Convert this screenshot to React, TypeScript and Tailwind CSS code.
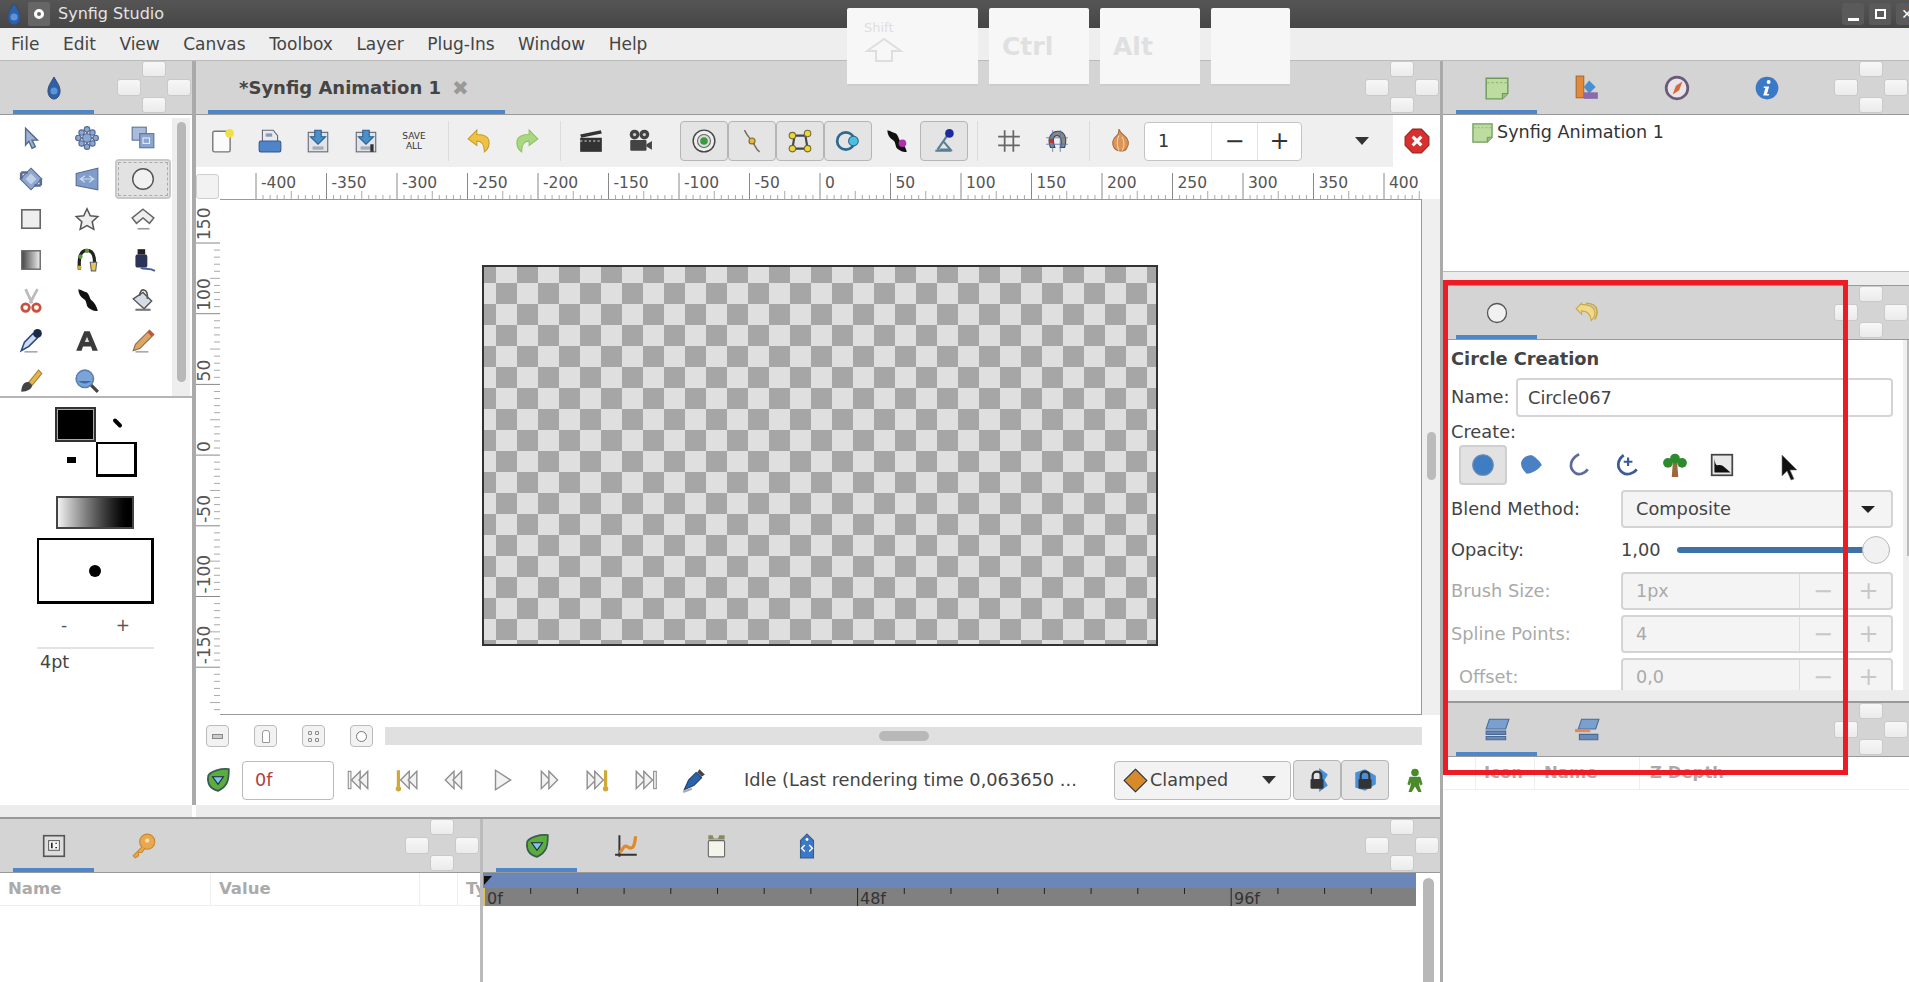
import React from "react";

type P = { s?: number };
const Svg = ({ s = 26, children }: { s?: number; children: React.ReactNode }) => (
	<svg width={s} height={s} viewBox="0 0 24 24" className="shrink-0">
		{children}
	</svg>
);

const Flame = ({ s = 26 }: P) => (
	<Svg s={s}>
		<path d="M12 1C9.5 6 5.5 10 6 16c.4 4 3 7 6 7s5.6-3 6-7c.5-6-3.5-10-6-15z" fill="#2a62ad" stroke="#3b4a66" />
		<circle cx="12" cy="15" r="3.5" fill="#5f93d6" />
	</Svg>
);
const Pointer = () => (
	<Svg>
		<path d="M7 3l11 11h-5l3 6-3 1.5-3-6.5-3 3.5z" fill="#9db3d6" stroke="#55698c" strokeWidth="1.3" />
	</Svg>
);
const Transform = () => (
	<Svg>
		<path d="M12 4v16M4 12h16" stroke="#6a86b5" strokeWidth="2" />
		<circle cx="12" cy="12" r="4" fill="#8aa6d4" stroke="#55698c" />
		{[[12, 4], [12, 20], [4, 12], [20, 12], [7, 7], [17, 7], [7, 17], [17, 17]].map(([x, y], i) => (
			<circle key={i} cx={x} cy={y} r="2.5" fill="#8aa6d4" stroke="#55698c" />
		))}
	</Svg>
);
const Squares = () => (
	<Svg>
		<rect x="2" y="2" width="13" height="12" fill="#a9bcdc" stroke="#5d7196" />
		<rect x="9" y="8" width="13" height="13" fill="#8ba5cf" stroke="#5d7196" />
		<rect x="12" y="12" width="6" height="5" fill="none" stroke="#e8eef8" />
	</Svg>
);
const Rotate = () => (
	<Svg>
		<path d="M12 2l10 10-10 10L2 12z" fill="#8ea7cf" stroke="#5a6d90" />
		<path d="M3 6h6M3 6v6M21 18h-6M21 18v-6" stroke="#5a6d90" strokeWidth="2.5" fill="none" />
		<path d="M12 7l5 5-5 5-5-5z" fill="#c1d0e8" />
	</Svg>
);
const Mirror = () => (
	<Svg>
		<path d="M2 7l20-5v20L2 18z" fill="#7f9ccb" stroke="#5a6d90" />
		<path d="M5 12h14M10 9l-4 3 4 3M14 9l4 3-4 3" stroke="#d6e1f2" fill="none" />
	</Svg>
);
const Circle = ({ s = 26 }: P) => (
	<Svg s={s}>
		<circle cx="12" cy="12" r="9.5" fill="#f1f1f1" stroke="#555" strokeWidth="1.3" />
	</Svg>
);
const Rect = () => (
	<Svg>
		<rect x="3.5" y="3.5" width="17" height="17" fill="#eee" stroke="#666" strokeWidth="1.5" />
	</Svg>
);
const Star = () => (
	<Svg>
		<path d="M12 2.5l3 6.5 7 .8-5.2 4.7 1.5 7L12 18l-6.3 3.5 1.5-7L2 9.8 9 9z" fill="#eee" stroke="#555" strokeWidth="1.4" />
	</Svg>
);
const Polygon = () => (
	<Svg>
		<path d="M12 3l10 8-4 5-6-5-6 5-4-5z" fill="#eee" stroke="#666" strokeWidth="1.4" />
		<path d="M7 21h11" stroke="#999" strokeWidth="1.5" />
	</Svg>
);
const Gradient = () => (
	<svg width="26" height="26" viewBox="0 0 24 24">
		<defs>
			<linearGradient id="gr1">
				<stop offset="0" stopColor="#444" />
				<stop offset="1" stopColor="#f0f0f0" />
			</linearGradient>
		</defs>
		<rect x="3.5" y="3.5" width="17" height="17" fill="url(#gr1)" stroke="#666" strokeWidth="1.3" />
	</svg>
);
const Spline = () => (
	<Svg>
		<path d="M5 21c-1-14 2-18 7-18s7 5 7 12" fill="none" stroke="#222" strokeWidth="3" />
		<circle cx="6" cy="9" r="2" fill="#5a9a3a" />
		<circle cx="5" cy="19" r="2" fill="#c9a83a" />
		<circle cx="12" cy="3.5" r="2" fill="#5a9a3a" />
		<path d="M15 14h6l-1 8h-4z" fill="#e4c65a" stroke="#666" />
	</Svg>
);
const Ink = () => (
	<Svg>
		<rect x="7" y="2" width="7" height="5" fill="#222" />
		<rect x="5" y="7" width="11" height="12" rx="2" fill="#2b3358" />
		<path d="M10 19c3 2 8 0 13 3" stroke="#4a5f9a" strokeWidth="2" fill="none" />
	</Svg>
);
const Scissors = () => (
	<Svg>
		<path d="M7 2l6 13M18 2l-7 13" stroke="#bbb" strokeWidth="2.5" />
		<circle cx="7" cy="19" r="3.5" fill="none" stroke="#c9503c" strokeWidth="2.5" />
		<circle cx="17" cy="19" r="3.5" fill="none" stroke="#c9503c" strokeWidth="2.5" />
	</Svg>
);
const Feather = ({ dot }: { dot?: boolean }) => (
	<Svg>
		<path d="M4 2c4 1 5 2 8 3 3 3 2 6 5 8 2 2 4 5 5 9-5 1-7-2-9-3-2-3-1-6-4-8C6 9 4 6 4 2z" fill="#111" />
		{dot && <circle cx="18" cy="14" r="3.5" fill="#b030b0" />}
	</Svg>
);
const Bucket = () => (
	<Svg>
		<path d="M3 11l9-6 8 8-7 7z" fill="#d6dce6" stroke="#555" strokeWidth="1.3" />
		<path d="M9 8c0-8 8-7 7 3" fill="none" stroke="#555" strokeWidth="1.5" />
		<path d="M5 21h14" stroke="#777" strokeWidth="2" />
	</Svg>
);
const Eyedropper = () => (
	<Svg>
		<path d="M3 21l3-8 8-8 4 4-8 8z" fill="#cfdcf0" stroke="#2d4a86" strokeWidth="1.5" />
		<circle cx="18" cy="5" r="4" fill="#1c2a4a" />
		<path d="M6 22h12" stroke="#aaa" strokeWidth="1.5" />
	</Svg>
);
const Letter = () => (
	<Svg>
		<path d="M2 21L9.5 3h5L22 21h-5l-1.3-4H8.3L7 21z" fill="#3a3a3a" />
		<path d="M10 13h4l-2-5z" fill="#ddd" />
	</Svg>
);
const Pencil = () => (
	<Svg>
		<path d="M3 21l2-6L18 2l4 4L9 19z" fill="#dca66a" stroke="#8a6a4a" />
		<path d="M18 2l4 4-2 2-4-4z" fill="#c9503c" />
		<path d="M5 22h12" stroke="#aaa" strokeWidth="1.5" />
	</Svg>
);
const Brush = () => (
	<Svg>
		<path d="M10 13L19 2l3 3-9 11z" fill="#e4b64e" stroke="#a98430" />
		<path d="M3 22c0-6 3-10 7-9l3 3c0 3-4 6-10 6z" fill="#444" />
	</Svg>
);
const Zoom = () => (
	<Svg>
		<path d="M14 14l8 8" stroke="#444" strokeWidth="3" />
		<circle cx="10" cy="10" r="8" fill="#7ba4d8" stroke="#5a7fb0" strokeWidth="1.5" />
		<path d="M4 12c3 3 9 3 12 0" fill="#3c6aa8" />
	</Svg>
);

const Page = () => (
	<Svg>
		<rect x="3.5" y="3" width="16" height="19" rx="1.5" fill="#fbfbfb" stroke="#777" strokeWidth="1.3" />
		<circle cx="19" cy="5" r="4" fill="#f2e040" />
	</Svg>
);
const Floppy = () => (
	<Svg>
		<path d="M5 2h10l4 5v6H5z" fill="#e8eaf0" stroke="#667" />
		<rect x="8" y="5" width="6" height="3" fill="#8899b0" />
		<rect x="2" y="12" width="20" height="10" rx="1.5" fill="#4f85c8" stroke="#345a92" />
	</Svg>
);
const SaveAs = ({ extra }: { extra?: boolean }) => (
	<Svg>
		<rect x="3" y="4" width="18" height="18" fill="#dfe4ea" stroke="#667" />
		<rect x="7" y="17" width="10" height="3" fill="#aaa" />
		<path d="M9 2h6v6h4l-7 7-7-7h4z" fill="#4a90c8" stroke="#2c5f90" />
		{extra && <rect x="16" y="15" width="3" height="7" fill="#333" />}
	</Svg>
);
const Arrow = ({ color, edge, flip }: { color: string; edge: string; flip?: boolean }) => (
	<svg width="26" height="26" viewBox="0 0 24 24" className={flip ? "-scale-x-100" : ""}>
		<path d="M10 2L2 10l8 6v-4c5 0 7 3 7 10 4-3 5-7 4-11-1-3-5-5-11-5z" fill={color} stroke={edge} />
	</svg>
);
const Clapper = () => (
	<Svg>
		<path d="M2 6l19-4 1 3-19 4z" fill="#333" />
		<rect x="2" y="9" width="20" height="13" fill="#333" />
		<path d="M2 12h20" stroke="#ddd" strokeDasharray="2 2" />
	</Svg>
);
const Camera = () => (
	<Svg>
		<circle cx="7" cy="6" r="4.5" fill="#444" />
		<circle cx="16" cy="6" r="4.5" fill="#444" />
		<circle cx="7" cy="6" r="1.5" fill="#ccc" />
		<circle cx="16" cy="6" r="1.5" fill="#ccc" />
		<rect x="3" y="11" width="15" height="10" rx="1" fill="#444" />
		<path d="M18 15l5-3v8l-5-3z" fill="#444" />
	</Svg>
);
const Target = () => (
	<Svg>
		<circle cx="12" cy="12" r="10" fill="#eee" stroke="#444" strokeWidth="1.3" />
		<circle cx="12" cy="12" r="6" fill="#ddd" stroke="#666" />
		<circle cx="12" cy="12" r="3.5" fill="#3c9a3c" />
	</Svg>
);
const Tangent = () => (
	<Svg>
		<path d="M5 2c3 6 4 6 7 10s3 7 7 10" fill="none" stroke="#776a55" strokeWidth="1.3" />
		<circle cx="12" cy="12" r="2.8" fill="#e8b83a" stroke="#776a30" />
	</Svg>
);
const Link = () => (
	<Svg>
		<path d="M5 19L7 7h12M7 19h12L17 7" fill="none" stroke="#445" strokeWidth="2" />
		<circle cx="19" cy="5" r="3" fill="#e8d83a" stroke="#776a30" />
		<circle cx="5" cy="7" r="3" fill="#e8d83a" stroke="#776a30" />
		<circle cx="19" cy="19" r="3" fill="#e8d83a" stroke="#776a30" />
		<circle cx="5" cy="19" r="3" fill="#e8d83a" stroke="#776a30" />
	</Svg>
);
const Width = () => (
	<Svg>
		<circle cx="10" cy="12" r="8" fill="none" stroke="#2a6a90" strokeWidth="2.5" />
		<circle cx="17" cy="12" r="4.5" fill="#4ac0e0" stroke="#2a6a90" />
	</Svg>
);
const Bone = () => (
	<Svg>
		<path d="M4 21h15M6 20l9-13M8 20h10L12 13" fill="none" stroke="#5a7f94" strokeWidth="2" />
		<circle cx="17" cy="5" r="4" fill="#1c2aa0" />
	</Svg>
);
const Grid = () => (
	<Svg>
		<path d="M8 2v20M16 2v20M2 8h20M2 16h20" stroke="#666" strokeWidth="1.6" />
	</Svg>
);
const Magnet = () => (
	<Svg>
		<path d="M6 18C2 8 8 3 13 3s9 5 6 15h-4c2-5 1-11-3-11s-4 5-2 11z" fill="#888" stroke="#444" />
		<path d="M2 9h20M2 15h20M8 2v20M15 2v20" stroke="#5a7ab0" strokeWidth=".8" />
		<circle cx="7" cy="12" r="2" fill="#c83030" />
	</Svg>
);
const Onion = () => (
	<Svg>
		<path d="M11 1c1 3 2 4 5 6 4 3 5 8 2 12-2 3-8 3-11 0-3-4-2-9 2-12 2-1 2-3 2-6z" fill="#dc9458" stroke="#a96a3a" />
		<path d="M11 7c-2 4-2 9 0 14M14 8c2 4 2 9 0 13" stroke="#f4d0a8" fill="none" />
	</Svg>
);
const Stop = () => (
	<Svg>
		<path d="M8 1h8l7 7v8l-7 7H8l-7-7V8z" fill="#d6302f" stroke="#9a2020" />
		<path d="M8 8l8 8M16 8l-8 8" stroke="#fff" strokeWidth="3" />
	</Svg>
);
const Sheet = ({ s = 26 }: P) => (
	<Svg s={s}>
		<path d="M2 3h20v14l-5 5H2z" fill="#bcdca0" stroke="#6f9a5c" strokeWidth="1.3" />
		<path d="M3 7h18" stroke="#8fb878" strokeDasharray="2 2" />
		<path d="M17 22v-5h5" fill="#9ac080" stroke="#6f9a5c" />
	</Svg>
);
const Palette = () => (
	<Svg>
		<rect x="2" y="1" width="7" height="20" fill="#e08a3a" stroke="#a8682e" />
		<path d="M14 5l6 6-6 6-5-6z" fill="#4a90d0" />
		<rect x="9" y="16" width="13" height="6" fill="#8a6aa8" />
	</Svg>
);
const Compass = () => (
	<Svg>
		<circle cx="12" cy="12" r="10" fill="#e8e4e8" stroke="#6a5a78" strokeWidth="2.5" />
		<path d="M17 6l-3 8-6 4 3-8z" fill="#d8683a" />
	</Svg>
);
const Info = () => (
	<Svg>
		<circle cx="12" cy="12" r="10.5" fill="#3a78c8" />
		<circle cx="13.5" cy="6.5" r="1.8" fill="#fff" />
		<path d="M9 10.5h5l-2 7h2l-.5 1.5H8.500l2-7H9z" fill="#fff" />
	</Svg>
);
const History = () => (
	<Svg>
		<path d="M7 3L2 8l5 5v-3c4 0 8 2 9 9 3-3 4-7 3-9-1-4-6-6-12-6z" fill="#f0d98a" stroke="#c9a845" />
		<path d="M11 3c5 0 9 2 10 6 1 3 0 6-2 9" fill="none" stroke="#c9a845" strokeWidth="1.5" />
	</Svg>
);
const Layers = () => (
	<Svg>
		<path d="M5 2h18l-3 9H2z" fill="#7aa0d0" stroke="#486a98" />
		<path d="M2 13h18v3H2zM2 18h18v3H2z" fill="#6a8ab8" stroke="#486a98" />
	</Svg>
);
const LayerGroups = () => (
	<Svg>
		<path d="M7 2h16l-3 9H4z" fill="#7aa0d0" stroke="#486a98" />
		<path d="M1 11h14v3H1z" fill="#e08a5a" />
		<path d="M5 16h17v5H5z" fill="#6a8ab8" stroke="#486a98" />
	</Svg>
);
const Params = () => (
	<Svg>
		<rect x="2.5" y="2.5" width="19" height="19" fill="#ddd" stroke="#555" strokeWidth="1.5" />
		<rect x="7" y="7" width="10" height="9" fill="#f4f4f4" stroke="#666" />
		<path d="M10 9v5M14 9v1M14 13v1" stroke="#222" strokeWidth="1.5" />
	</Svg>
);
const Key = () => (
	<Svg>
		<circle cx="15" cy="8" r="7" fill="#e8a850" stroke="#c98830" />
		<circle cx="15" cy="7" r="2" fill="#f6dca8" />
		<path d="M10 13L2 21l2 2 3-2v-3h3l3-4" fill="#e8a850" stroke="#c98830" />
	</Svg>
);
const Shield = ({ s = 26 }: P) => (
	<Svg s={s}>
		<path d="M22 2c0 10-1 16-10 20C4 20 2 14 3 8c2-4 12-7 19-6z" fill="#5cae3c" stroke="#3a5a54" strokeWidth="1.6" />
		<path d="M7 9h10l-5 7z" fill="#7cc8e8" stroke="#224" />
	</Svg>
);
const Curves = () => (
	<Svg>
		<path d="M5 2v20M1 20h20" stroke="#333" strokeWidth="1.8" />
		<path d="M5 18c4-2 3-8 8-5s6-2 7-10" fill="none" stroke="#e08a30" strokeWidth="3" />
	</Svg>
);
const Keyframes = () => (
	<Svg>
		<path d="M4 2h4l1 3h4l1-3h5v4H4z" fill="#8a8a60" />
		<rect x="4" y="7" width="15" height="15" rx="1" fill="#f4f4ec" stroke="#666" />
	</Svg>
);
const Meta = () => (
	<Svg>
		<path d="M12 1l6 6v16H6V7z" fill="#3a78c8" stroke="#3a5a88" />
		<circle cx="12" cy="6" r="1.3" fill="#fff" />
		<path d="M10 11l-3 3 3 3M14 11l3 3-3 3" stroke="#fff" fill="none" strokeWidth="1.3" />
	</Svg>
);
const Spot = () => (
	<Svg>
		<circle cx="12" cy="12" r="9.5" fill="#3e7cc4" stroke="#6a8ab0" />
	</Svg>
);
const Region = () => (
	<Svg>
		<path d="M3 9c2-5 6-6 10-6 5 3 8 7 9 9-3 4-9 8-14 8-3-3-6-6-5-11z" fill="#4a80c4" />
	</Svg>
);
const Outline = () => (
	<Svg>
		<path d="M13 2C5 6 3 14 9 19c4 3 9 1 12-3" fill="none" stroke="#5e6a9a" strokeWidth="2.5" />
	</Svg>
);
const Advanced = () => (
	<Svg>
		<path d="M9 3C3 7 2 15 8 19c4 3 10 1 13-3" fill="none" stroke="#3a5a98" strokeWidth="2.5" />
		<path d="M13 5v8M9 9h8" stroke="#3a5a98" strokeWidth="2" />
	</Svg>
);
const Plant = () => (
	<Svg>
		<path d="M10 10h4l1 13H9z" fill="#9a6a3a" />
		<circle cx="12" cy="6" r="4.5" fill="#2e8a2e" />
		<circle cx="5.5" cy="10" r="4.5" fill="#2e8a2e" />
		<circle cx="18.5" cy="10" r="4.5" fill="#2e8a2e" />
	</Svg>
);
const Picture = () => (
	<Svg>
		<rect x="2.5" y="2.5" width="19" height="19" fill="#e8e8e8" stroke="#444" strokeWidth="1.6" />
		<path d="M5 19V6c1 8 3 6 5 6 3 0 5 3 10 7z" fill="#111" />
	</Svg>
);
const Lock = ({ left }: { left?: boolean }) => (
	<Svg>
		<path d={left ? "M14 1l8 6-3 5 3 5-8 6z" : "M3 5l9-3 10 6v8l-10 6-9-3z"} fill="#4a90d8" />
		<path d="M8 11V8c0-5 8-5 8 0v3" fill="none" stroke="#333" strokeWidth="2" />
		<rect x="6" y="11" width="12" height="9" rx="1" fill="#333" />
	</Svg>
);
const Walker = () => (
	<Svg>
		<circle cx="12" cy="5" r="3.5" fill="#4a8a2a" />
		<path d="M7 9h10l2 7-2 1-1-3v3l2 6h-3l-3-5-3 5H6l2-6v-3l-1 3-2-1z" fill="#4a8a2a" />
	</Svg>
);
const Jack = () => (
	<Svg>
		<path d="M3 21l4-9 7-7 5 5-7 7z" fill="#2a62ad" stroke="#1c3e70" />
		<path d="M17 2l5 5-3 2-4-4z" fill="#444" />
		<path d="M2 23l8-3" stroke="#aaa" strokeWidth="2" />
	</Svg>
);

const Transport = ({ kind }: { kind: string }) => {
	const c = "#f2f2f2";
	const st = "#8f8f8f";
	const left = (x: number) => <path d={`M${x + 8} 4L${x} 12l8 8z`} fill={c} stroke={st} strokeWidth="1.3" />;
	const right = (x: number) => <path d={`M${x} 4l8 8-8 8z`} fill={c} stroke={st} strokeWidth="1.3" />;
	const therm = (x: number) => (
		<g>
			<path d={`M${x} 3v15`} stroke="#d0a838" strokeWidth="3" />
			<circle cx={x} cy="20" r="2.5" fill="#d0a838" />
		</g>
	);
	return (
		<Svg>
			{kind === "first" && (<><rect x="3" y="4" width="2.5" height="16" fill={c} stroke={st} />{left(6)}{left(13)}</>)}
			{kind === "prevk" && (<>{therm(5)}{left(7)}{left(14)}</>)}
			{kind === "prev" && (<>{left(4)}{left(11)}</>)}
			{kind === "play" && <path d="M6 3l14 9-14 9z" fill={c} stroke={st} strokeWidth="1.3" />}
			{kind === "next" && (<>{right(4)}{right(11)}</>)}
			{kind === "nextk" && (<>{right(2)}{right(9)}{therm(19)}</>)}
			{kind === "last" && (<>{right(3)}{right(10)}<rect x="19" y="4" width="2.5" height="16" fill={c} stroke={st} /></>)}
		</Svg>
	);
};

const dockBtn = "rounded-[3px] bg-gradient-to-b from-[#f7f7f7] to-[#ebebeb] border border-[#c9c9c9]";
const Dock = () => (
	<div className="grid grid-cols-[25px_25px_25px] grid-rows-[18px_18px_18px] shrink-0">
		<div className={`col-start-2 row-start-1 w-[24px] h-[16px] ${dockBtn}`} />
		<div className={`col-start-1 row-start-2 w-[24px] h-[17px] ${dockBtn}`} />
		<div className={`col-start-3 row-start-2 w-[24px] h-[17px] ${dockBtn}`} />
		<div className={`col-start-2 row-start-3 w-[24px] h-[16px] ${dockBtn}`} />
	</div>
);

// tab strip shared by every dock panel; each tab is 90px wide around its icon
const TabBar = ({ icons }: { icons: React.ReactNode[] }) => (
	<div className="h-[54px] bg-[#d4d4d4] border-b border-[#999] flex justify-between shrink-0 overflow-hidden">
		<div className="flex pl-[13px]">
			{icons.map((ic, i) => (
				<div key={i} className={`w-[81px] mr-[9px] h-full flex items-center justify-center border-t-[4px] border-b-[4px] border-t-transparent ${i === 0 ? "border-b-[#4f86c9]" : "border-b-transparent"}`}>
					{ic}
				</div>
			))}
		</div>
		<Dock />
	</div>
);

const Slot = ({ w = "w-[48px]", children }: { w?: string; children?: React.ReactNode }) => (
	<div className={`h-full flex items-center justify-center shrink-0 ${w}`}>{children}</div>
);
const ToggleBtn = ({ on = true, children }: { on?: boolean; children: React.ReactNode }) => (
	<div className={`w-[48px] h-[40px] shrink-0 flex items-center justify-center rounded-[4px] ${on ? "bg-[#e4e4e4] border border-[#b5b5b5]" : ""}`}>
		{children}
	</div>
);
const Sep = () => <div className="w-px h-[40px] bg-[#dcdcdc] shrink-0" />;

const tools = [
	<Pointer />, <Transform />, <Squares />,
	<Rotate />, <Mirror />, <Circle />,
	<Rect />, <Star />, <Polygon />,
	<Gradient />, <Spline />, <Ink />,
	<Scissors />, <Feather />, <Bucket />,
	<Eyedropper />, <Letter />, <Pencil />,
	<Brush />, <Zoom />,
];

const Toolbox = () => (
	<div className="w-[192px] shrink-0 flex flex-col">
		<TabBar icons={[<Flame s={24} />]} />
		<div className="h-[283px] flex border-b-2 border-[#b5b5b5] overflow-hidden shrink-0">
			<div className="w-[172px] pl-[3px] pt-[3px] grid grid-cols-[56px_56px_56px] auto-rows-[40.5px] justify-items-center items-center content-start">
				{tools.map((t, i) => (
					<div key={i} className={i === 5 ? "w-[56px] h-[40px] rounded-[4px] bg-[#e2e2e2] border-2 border-[#c8c8c8] outline-1 outline-dashed -outline-offset-4 outline-[#aaa] flex items-center justify-center" : "flex items-center justify-center"}>
						{t}
					</div>
				))}
			</div>
			<div className="w-[18px] h-[278px] mt-[3px] bg-[#eeeeee] flex justify-center">
				<div className="w-[9px] h-[260px] mt-[4px] rounded-full bg-[#b8b8b8]" />
			</div>
		</div>
		<div className="flex-1 flex flex-col pl-[37px] pt-[9px] min-h-0">
			<div className="flex h-[70px] ml-[18px]">
				<div className="w-[41px] h-[35px] bg-black border-[3px] border-[#333] outline outline-1 -outline-offset-3 outline-[#aaa]" />
				<div className="w-[41px] h-[35px] mt-[35px] bg-white border-2 border-black border-b-[3px] border-r-[3px] relative">
					<div className="absolute left-[14px] top-[-23px] w-[11px] h-[4px] bg-black rotate-45 rounded-full" />
					<div className="absolute left-[-31px] top-[13px] w-[9px] h-[6px] bg-black" />
				</div>
			</div>
			<div className="w-[78px] h-[33px] mt-[19px] ml-[19px] border-2 border-[#444] bg-gradient-to-r from-[#f2f2f2] to-black" />
			<div className="w-[117px] h-[66px] mt-[9px] bg-white border-2 border-black border-b-[3px] border-r-[3px] flex items-center justify-center">
				<div className="w-[12px] h-[12px] rounded-full bg-black" />
			</div>
			<div className="w-[117px] flex justify-between px-[24px] mt-[8px] text-[17px] leading-[26px] text-[#555]">
				<span>-</span>
				<span>+</span>
			</div>
			<div className="w-[117px] mt-[9px] border-t-2 border-[#e3e3e3] pl-[3px] text-[17.6px] leading-[26px] text-[#444]">4pt</div>
		</div>
		<div className="h-[12px] bg-[#ececec] shrink-0" />
	</div>
);

const hTicks = Array.from({ length: 171 }, (_, i) => i);
const TopRuler = () => (
	<svg width="1202" height="32" className="shrink-0">
		{hTicks.map((i) => {
			const x = 36 + i * 7.05;
			const major = i % 10 === 0;
			const mid = i % 5 === 0;
			return <line key={i} x1={x} x2={x} y1={major ? 6 : mid ? 24 : 28} y2={32} stroke={major ? "#888" : "#aaa"} />;
		})}
		{Array.from({ length: 17 }, (_, i) => -400 + i * 50).map((v, i) => (
			<text key={v} x={36 + i * 70.5 + 5} y={21} fontSize="15.5" fill="#555" fontFamily="DejaVu Sans">
				{v}
			</text>
		))}
	</svg>
);
const LeftRuler = () => (
	<svg width="24" height="516" className="shrink-0">
		{Array.from({ length: 74 }, (_, i) => i).map((i) => {
			const y = 44 + i * 7.07;
			const major = i % 10 === 0;
			return <line key={i} x1={major ? 0 : i % 5 === 0 ? 14 : 18} x2={24} y1={y} y2={y} stroke={major ? "#888" : "#aaa"} />;
		})}
		{[150, 100, 50, 0, -50, -100, -150].map((v, i) => (
			<text key={v} x={14} y={44 + i * 70.7 - 3} fontSize="17" fill="#555" fontFamily="DejaVu Sans" transform={`rotate(-90 14 ${44 + i * 70.7 - 3})`}>
				{v}
			</text>
		))}
	</svg>
);

const Center = () => (
	<div className="flex-1 min-w-0 flex flex-col">
		<div className="h-[54px] bg-[#d4d4d4] border-b border-[#999] flex justify-between shrink-0">
			<div className="ml-[12px] w-[297px] h-full border-t-[4px] border-t-transparent border-b-[4px] border-b-[#4f86c9] flex items-center pl-[31px] gap-[11px] font-bold text-[18px] text-[#444]">
				<span className="whitespace-nowrap">*Synfig Animation 1</span>
				<span className="text-[#999] text-[20px] leading-none">✖</span>
			</div>
			<Dock />
		</div>
		<div className="h-[52px] flex shrink-0">
			<div className="w-[1197px] bg-[#efefef] flex items-center pl-[2px]">
				<Slot><Page /></Slot>
				<Slot><Floppy /></Slot>
				<Slot><SaveAs /></Slot>
				<Slot><SaveAs extra /></Slot>
				<Slot>
					<div className="text-[9px] leading-[10px] text-[#333] text-center">SAVE<br />ALL</div>
				</Slot>
				<Slot w="w-[10px]" />
				<Sep />
				<Slot w="w-[6px]" />
				<Slot><Arrow color="#eec243" edge="#c69a2a" /></Slot>
				<Slot><Arrow color="#a8d880" edge="#8cc060" flip /></Slot>
				<Slot w="w-[9px]" />
				<Sep />
				<Slot w="w-[6px]" />
				<Slot><Clapper /></Slot>
				<Slot w="w-[49px]"><Camera /></Slot>
				<Slot w="w-[16px]" />
				<ToggleBtn><Target /></ToggleBtn>
				<ToggleBtn><Tangent /></ToggleBtn>
				<ToggleBtn><Link /></ToggleBtn>
				<ToggleBtn><Width /></ToggleBtn>
				<ToggleBtn on={false}><Feather dot /></ToggleBtn>
				<ToggleBtn><Bone /></ToggleBtn>
				<Slot w="w-[9px]" />
				<Sep />
				<Slot w="w-[7px]" />
				<Slot><Grid /></Slot>
				<Slot><Magnet /></Slot>
				<Slot w="w-[8px]" />
				<Sep />
				<Slot w="w-[6px]" />
				<Slot><Onion /></Slot>
				<div className="w-[158px] h-[39px] bg-white border border-[#c4c4c4] rounded-[4px] flex items-center text-[17.6px] text-[#333] shrink-0">
					<span className="w-[66px] pl-[13px]">1</span>
					<span className="w-[46px] h-full border-l border-[#e4e4e4] flex items-center justify-center text-[24px]">−</span>
					<span className="flex-1 h-full border-l border-[#e4e4e4] flex items-center justify-center text-[24px]">+</span>
				</div>
				<Slot w="w-[120px]">
					<div className="w-0 h-0 border-x-[7px] border-x-transparent border-t-[8px] border-t-[#333]" />
				</Slot>
			</div>
			<div className="flex-1 flex items-center justify-center"><Stop /></div>
		</div>
		<div className="h-[32px] flex shrink-0">
			<div className="w-[24px] flex items-end shrink-0">
				<div className="w-[23px] h-[25px] rounded-[3px] bg-[#f2f2f2] border border-[#cfcfcf]" />
			</div>
			<TopRuler />
		</div>
		<div className="h-[516px] flex shrink-0">
			<LeftRuler />
			<div className="w-[1202px] bg-white border-t border-b border-r border-[#999] flex items-center justify-center pr-[2px] pb-[3px]">
				<div className="w-[676px] h-[381px] border-2 border-[#333] box-border bg-[conic-gradient(#dfdfdf_25%,#a6a6a6_0_50%,#dfdfdf_0_75%,#a6a6a6_0)] bg-[length:42px_42px] bg-[position:-9px_-5px]" />
			</div>
			<div className="flex-1 bg-[#efefef] flex justify-center">
				<div className="w-[9px] h-[48px] mt-[233px] rounded-full bg-[#bbb]" />
			</div>
		</div>
		<div className="h-[45px] flex items-start pt-[10px] pl-[10px] shrink-0 gap-[25px]">
			{["m", "d", "g", "c"].map((k) => (
				<div key={k} className="w-[23px] h-[22px] rounded-[4px] bg-[#f2f2f2] border border-[#bbb] flex items-center justify-center shrink-0">
					{k === "m" && <div className="w-[11px] h-[5px] border border-[#888] bg-[#ccc]" />}
					{k === "d" && <div className="w-[8px] h-[13px] border border-[#999] rounded-t-[3px] bg-white" />}
					{k === "g" && (
						<div className="grid grid-cols-2 gap-[3px]">
							<div className="w-[4px] h-[4px] border border-[#888] rounded-[1px]" />
							<div className="w-[4px] h-[4px] border border-[#888] rounded-[1px]" />
							<div className="w-[4px] h-[4px] border border-[#888] rounded-[1px]" />
							<div className="w-[4px] h-[4px] border border-[#888] rounded-[1px]" />
						</div>
					)}
					{k === "c" && <div className="w-[11px] h-[11px] border border-[#777] rounded-full bg-white" />}
				</div>
			))}
			<div className="w-[1037px] h-[18px] mt-[2px] -ml-[13px] bg-[#e0e0e0] flex items-center shrink-0 pl-[494px]">
				<div className="w-[50px] h-[10px] rounded-full bg-[#b8b8b8]" />
			</div>
		</div>
		<div className="h-[40px] flex items-center shrink-0">
			<Slot w="w-[46px] pr-[2px]"><Shield /></Slot>
			<div className="w-[92px] h-[39px] shrink-0 rounded-[4px] border border-[#bbb] bg-white pl-[12px] leading-[37px] text-[17.6px] text-[#b04040]">0f</div>
			<Slot><Transport kind="first" /></Slot>
			<Slot><Transport kind="prevk" /></Slot>
			<Slot><Transport kind="prev" /></Slot>
			<Slot><Transport kind="play" /></Slot>
			<Slot><Transport kind="next" /></Slot>
			<Slot><Transport kind="nextk" /></Slot>
			<Slot><Transport kind="last" /></Slot>
			<Slot><Jack /></Slot>
			<div className="w-[396px] pl-[26px] text-[17.8px] whitespace-nowrap text-[#444] shrink-0">Idle (Last rendering time 0,063650 ...</div>
			<div className="w-[177px] h-[39px] rounded-[4px] border border-[#bbb] bg-[#f3f3f3] flex items-center pl-[10px] text-[17.6px] text-[#444] shrink-0">
				<div className="w-[17px] h-[17px] rotate-45 bg-[#d68a2a] border border-[#333] mr-[6px] ml-[2px]" />
				<span>Clamped</span>
				<div className="ml-auto mr-[14px] w-0 h-0 border-x-[7px] border-x-transparent border-t-[8px] border-t-[#333]" />
			</div>
			<div className="w-[48px] h-[40px] ml-[2px] rounded-[4px] bg-[#e4e4e4] border border-[#b5b5b5] flex items-center justify-center shrink-0"><Lock left /></div>
			<div className="w-[48px] h-[40px] rounded-[4px] bg-[#e4e4e4] border border-[#b5b5b5] flex items-center justify-center shrink-0"><Lock /></div>
			<Slot w="w-[51px]"><Walker /></Slot>
		</div>
		<div className="flex-1 min-h-0" />
		<div className="h-[12px] bg-[#ececec] shrink-0" />
	</div>
);

const Timeline = () => (
	<svg width="933" height="33" className="shrink-0">
		<rect width="933" height="15" fill="#6b86b8" />
		<rect y="15" width="933" height="18" fill="#808080" />
		{Array.from({ length: 20 }, (_, i) => i).map((i) => {
			const x = 1 + i * 46.7;
			const big = i % 8 === 0 && i > 0;
			return <line key={i} x1={x} x2={x} y1={15} y2={big ? 33 : 21} stroke="#222" />;
		})}
		<rect x="0" y="15" width="2" height="18" fill="#e0c050" />
		<path d="M1 3h8l-8 9z" fill="#111" />
		<text x="4" y="31" fontSize="16" fill="#333" fontFamily="DejaVu Sans">0f</text>
		<text x="377" y="31" fontSize="16" fill="#333" fontFamily="DejaVu Sans">48f</text>
		<text x="751" y="31" fontSize="16" fill="#333" fontFamily="DejaVu Sans">96f</text>
	</svg>
);

const Bottom = () => (
	<div className="flex-1 min-h-0 flex border-t-2 border-[#999]">
		<div className="w-[480px] shrink-0 flex flex-col overflow-hidden">
			<TabBar icons={[<Params />, <Key />]} />
			<div className="h-[33px] border-b border-[#eee] flex font-bold text-[16.5px] text-[#aaa] leading-[32px] overflow-hidden">
				<div className="w-[211px] pl-[8px] border-r border-[#eee] shrink-0">Name</div>
				<div className="w-[209px] pl-[8px] border-r border-[#eee] shrink-0">Value</div>
				<div className="w-[38px] border-r border-[#eee] shrink-0" />
				<div className="pl-[8px] shrink-0">Type</div>
			</div>
		</div>
		<div className="w-[3px] bg-[#bbb] shrink-0" />
		<div className="flex-1 min-w-0 flex flex-col">
			<TabBar icons={[<Shield />, <Curves />, <Keyframes />, <Meta />]} />
			<div className="flex flex-1 min-h-0">
				<Timeline />
				<div className="flex-1 flex justify-center pt-[5px]">
					<div className="w-[11px] h-full rounded-t-full bg-[#b8b8b8]" />
				</div>
			</div>
		</div>
	</div>
);

const Spin = ({ value }: { value: string }) => (
	<div className="w-[272px] h-[38px] rounded-[4px] border-2 border-[#d4d4d4] bg-[#f4f4f4] flex items-center text-[#aaa] text-[17.6px] shrink-0">
		<span className="w-[176px] pl-[13px]">{value}</span>
		<span className="flex-1 h-full border-l border-[#ddd] flex items-center text-[24px] text-[#c8c8c8]">
			<span className="w-[46px] text-center">−</span>
			<span className="flex-1 text-center">+</span>
		</span>
	</div>
);

const Row = ({ label, dim, children, cls = "" }: { label: string; dim?: boolean; children: React.ReactNode; cls?: string }) => (
	<div className={`flex items-center h-[38px] shrink-0 ${cls}`}>
		<div className={`w-[170px] shrink-0 whitespace-nowrap ${dim ? "text-[#aaa]" : "text-[#444]"}`}>{label}</div>
		{children}
	</div>
);

const ToolOptions = () => (
	<div className="h-[350px] flex shrink-0 overflow-hidden">
		<div className="w-[460px] shrink-0 pl-[8px] flex flex-col text-[17.8px] text-[#444]">
			<div className="h-[38px] leading-[38px] font-bold shrink-0">Circle Creation</div>
			<div className="flex items-center h-[39px] shrink-0">
				<span className="w-[65px]">Name:</span>
				<div className="w-[377px] h-[39px] border-2 border-[#d4d4d4] rounded-[4px] bg-white pl-[10px] leading-[35px]">Circle067</div>
			</div>
			<div className="h-[28px] leading-[30px] shrink-0">Create:</div>
			<div className="h-[40px] flex items-center shrink-0 pl-[8px]">
				<div className="w-[48px] h-[40px] rounded-[4px] bg-[#e2e2e2] border-2 border-[#cfcfcf] flex items-center justify-center"><Spot /></div>
				<Slot w="w-[47px]"><Region /></Slot>
				<Slot><Outline /></Slot>
				<Slot w="w-[49px]"><Advanced /></Slot>
				<Slot w="w-[47px]"><Plant /></Slot>
				<Slot><Picture /></Slot>
			</div>
			<Row label="Blend Method:" cls="mt-[5px]">
				<div className="w-[272px] h-[38px] rounded-[4px] border-2 border-[#d4d4d4] bg-[#f4f4f4] pl-[13px] flex items-center justify-between shrink-0">
					<span>Composite</span>
					<div className="mr-[16px] w-0 h-0 border-x-[7px] border-x-transparent border-t-[7px] border-t-[#222]" />
				</div>
			</Row>
			<Row label="Opacity:" cls="mt-[3px]">
				<div className="w-[56px] shrink-0">1,00</div>
				<div className="w-[213px] h-[6px] rounded-full bg-[#3f73a8] relative">
					<div className="absolute right-0 top-[-11px] w-[28px] h-[28px] rounded-full bg-[#f1f1f1] border border-[#bbb]" />
				</div>
			</Row>
			<Row label="Brush Size:" dim cls="mt-[3px]"><Spin value="1px" /></Row>
			<Row label="Spline Points:" dim cls="mt-[5px]"><Spin value="4" /></Row>
			<div className="flex items-center h-[38px] shrink-0 mt-[5px]">
				<div className="w-[170px] pl-[8px] text-[#aaa]">Offset:</div>
				<Spin value="0,0" />
			</div>
		</div>
		<div className="flex-1 bg-[#efefef] flex justify-end">
			<div className="w-[2px] h-[216px] bg-[#bbb]" />
		</div>
	</div>
);

const Right = () => (
	<div className="flex-1 min-w-0 flex flex-col overflow-hidden">
		<TabBar icons={[<Sheet />, <Palette />, <Compass />, <Info />]} />
		<div className="h-[157px] bg-white border-b border-[#bbb] shrink-0 pl-[28px] pt-[4px]">
			<div className="flex items-center gap-[3px] text-[17.6px] text-[#333]">
				<Sheet s={23} />
				<span>Synfig Animation 1</span>
			</div>
		</div>
		<div className="h-[14px] bg-[#ececec] border-b border-[#999] shrink-0" />
		<TabBar icons={[<Circle s={24} />, <History />]} />
		<ToolOptions />
		<div className="h-[13px] bg-[#ececec] border-b-2 border-[#999] shrink-0" />
		<TabBar icons={[<Layers />, <LayerGroups />]} />
		<div className="h-[33px] border-b border-[#eee] flex font-bold text-[16.5px] text-[#aaa] leading-[32px] pl-[32px]">
			<div className="w-[60px] pl-[8px] border-x border-[#eee] shrink-0">Icon</div>
			<div className="w-[105px] pl-[9px] border-r border-[#eee] shrink-0">Name</div>
			<div className="pl-[10px] shrink-0">Z Depth</div>
		</div>
	</div>
);

const KeyCap = ({ w, children }: { w: string; children?: React.ReactNode }) => (
	<div className={`${w} h-[78px] bg-[#f7f7f7] border-b-2 border-[#ccc] rounded-[2px] shrink-0`}>{children}</div>
);

export default function App() {
	return (
		<div className="relative w-[1909px] h-[982px] overflow-hidden bg-white font-['DejaVu_Sans',sans-serif] flex flex-col">
			<div className="h-[28px] shrink-0 bg-gradient-to-b from-[#555] to-[#464646] flex items-center">
				<div className="w-[28px] flex justify-center"><Flame s={24} /></div>
				<div className="w-[22px] h-[24px] bg-[#666] rounded-[2px] flex items-center justify-center">
					<div className="w-[10px] h-[10px] rounded-full border-[3px] border-white" />
				</div>
				<span className="ml-[8px] text-[16px] text-[#e4e4e4]">Synfig Studio</span>
				<div className="ml-auto flex gap-[5px] -mr-[9px]">
					<div className="w-[22px] h-[22px] rounded-[3px] bg-[#5a5a5a] flex items-end justify-center pb-[4px]"><div className="w-[11px] h-[3px] bg-white" /></div>
					<div className="w-[22px] h-[22px] rounded-[3px] bg-[#5a5a5a] flex items-center justify-center"><div className="w-[11px] h-[10px] border-2 border-white" /></div>
					<div className="w-[22px] h-[22px] rounded-[3px] bg-[#5a5a5a] text-white text-[14px] leading-[22px] text-center font-bold">✕</div>
				</div>
			</div>
			<div className="h-[33px] shrink-0 bg-[#eeeeee] border-b border-[#bbb] flex items-center gap-[23.5px] pl-[11px] pt-[2px] text-[17px] text-[#444]">
				{["File", "Edit", "View", "Canvas", "Toolbox", "Layer", "Plug-Ins", "Window", "Help"].map((m) => (
					<span key={m}>{m}</span>
				))}
			</div>
			<div className="flex-1 min-h-0 flex">
				<div className="w-[1440px] shrink-0 flex flex-col">
					<div className="h-[756px] flex shrink-0">
						<Toolbox />
						<div className="w-[4px] h-[744px] bg-[#aaa] shrink-0" />
						<Center />
					</div>
					<Bottom />
				</div>
				<div className="w-[3px] bg-[#aaa] shrink-0" />
				<Right />
			</div>

			{/* on-screen modifier keys sit over the window */}
			<div className="absolute left-[847px] top-[8px] flex gap-[11px]">
				<KeyCap w="w-[131px]">
					<div className="pl-[17px] pt-[13px] text-[13px] leading-[14px] text-[#dedede]">Shift</div>
					<svg width="40" height="26" viewBox="0 0 40 26" className="ml-[17px] mt-[2px]">
						<path d="M20 2L3 14h9v10h16V14h9z" fill="none" stroke="#dedede" strokeWidth="2" />
					</svg>
				</KeyCap>
				<KeyCap w="w-[100px]">
					<div className="pl-[13px] pt-[24px] text-[25px] leading-[30px] font-bold text-[#e0e0e0]">Ctrl</div>
				</KeyCap>
				<KeyCap w="w-[100px]">
					<div className="pl-[13px] pt-[24px] text-[25px] leading-[30px] font-bold text-[#e0e0e0]">Alt</div>
				</KeyCap>
				<KeyCap w="w-[79px]" />
			</div>

			{/* red highlight from the tutorial */}
			<div className="absolute left-[1443px] top-[280px] w-[405px] h-[495px] border-[5px] border-[#ed1c24] pointer-events-none" />

			<svg width="20" height="28" viewBox="0 0 20 28" className="absolute left-[1781px] top-[454px]">
				<path d="M1 1l15 15h-7l4 9-3 1-4-9-5 5z" fill="#111" stroke="#777" strokeWidth=".6" />
			</svg>
		</div>
	);
}
